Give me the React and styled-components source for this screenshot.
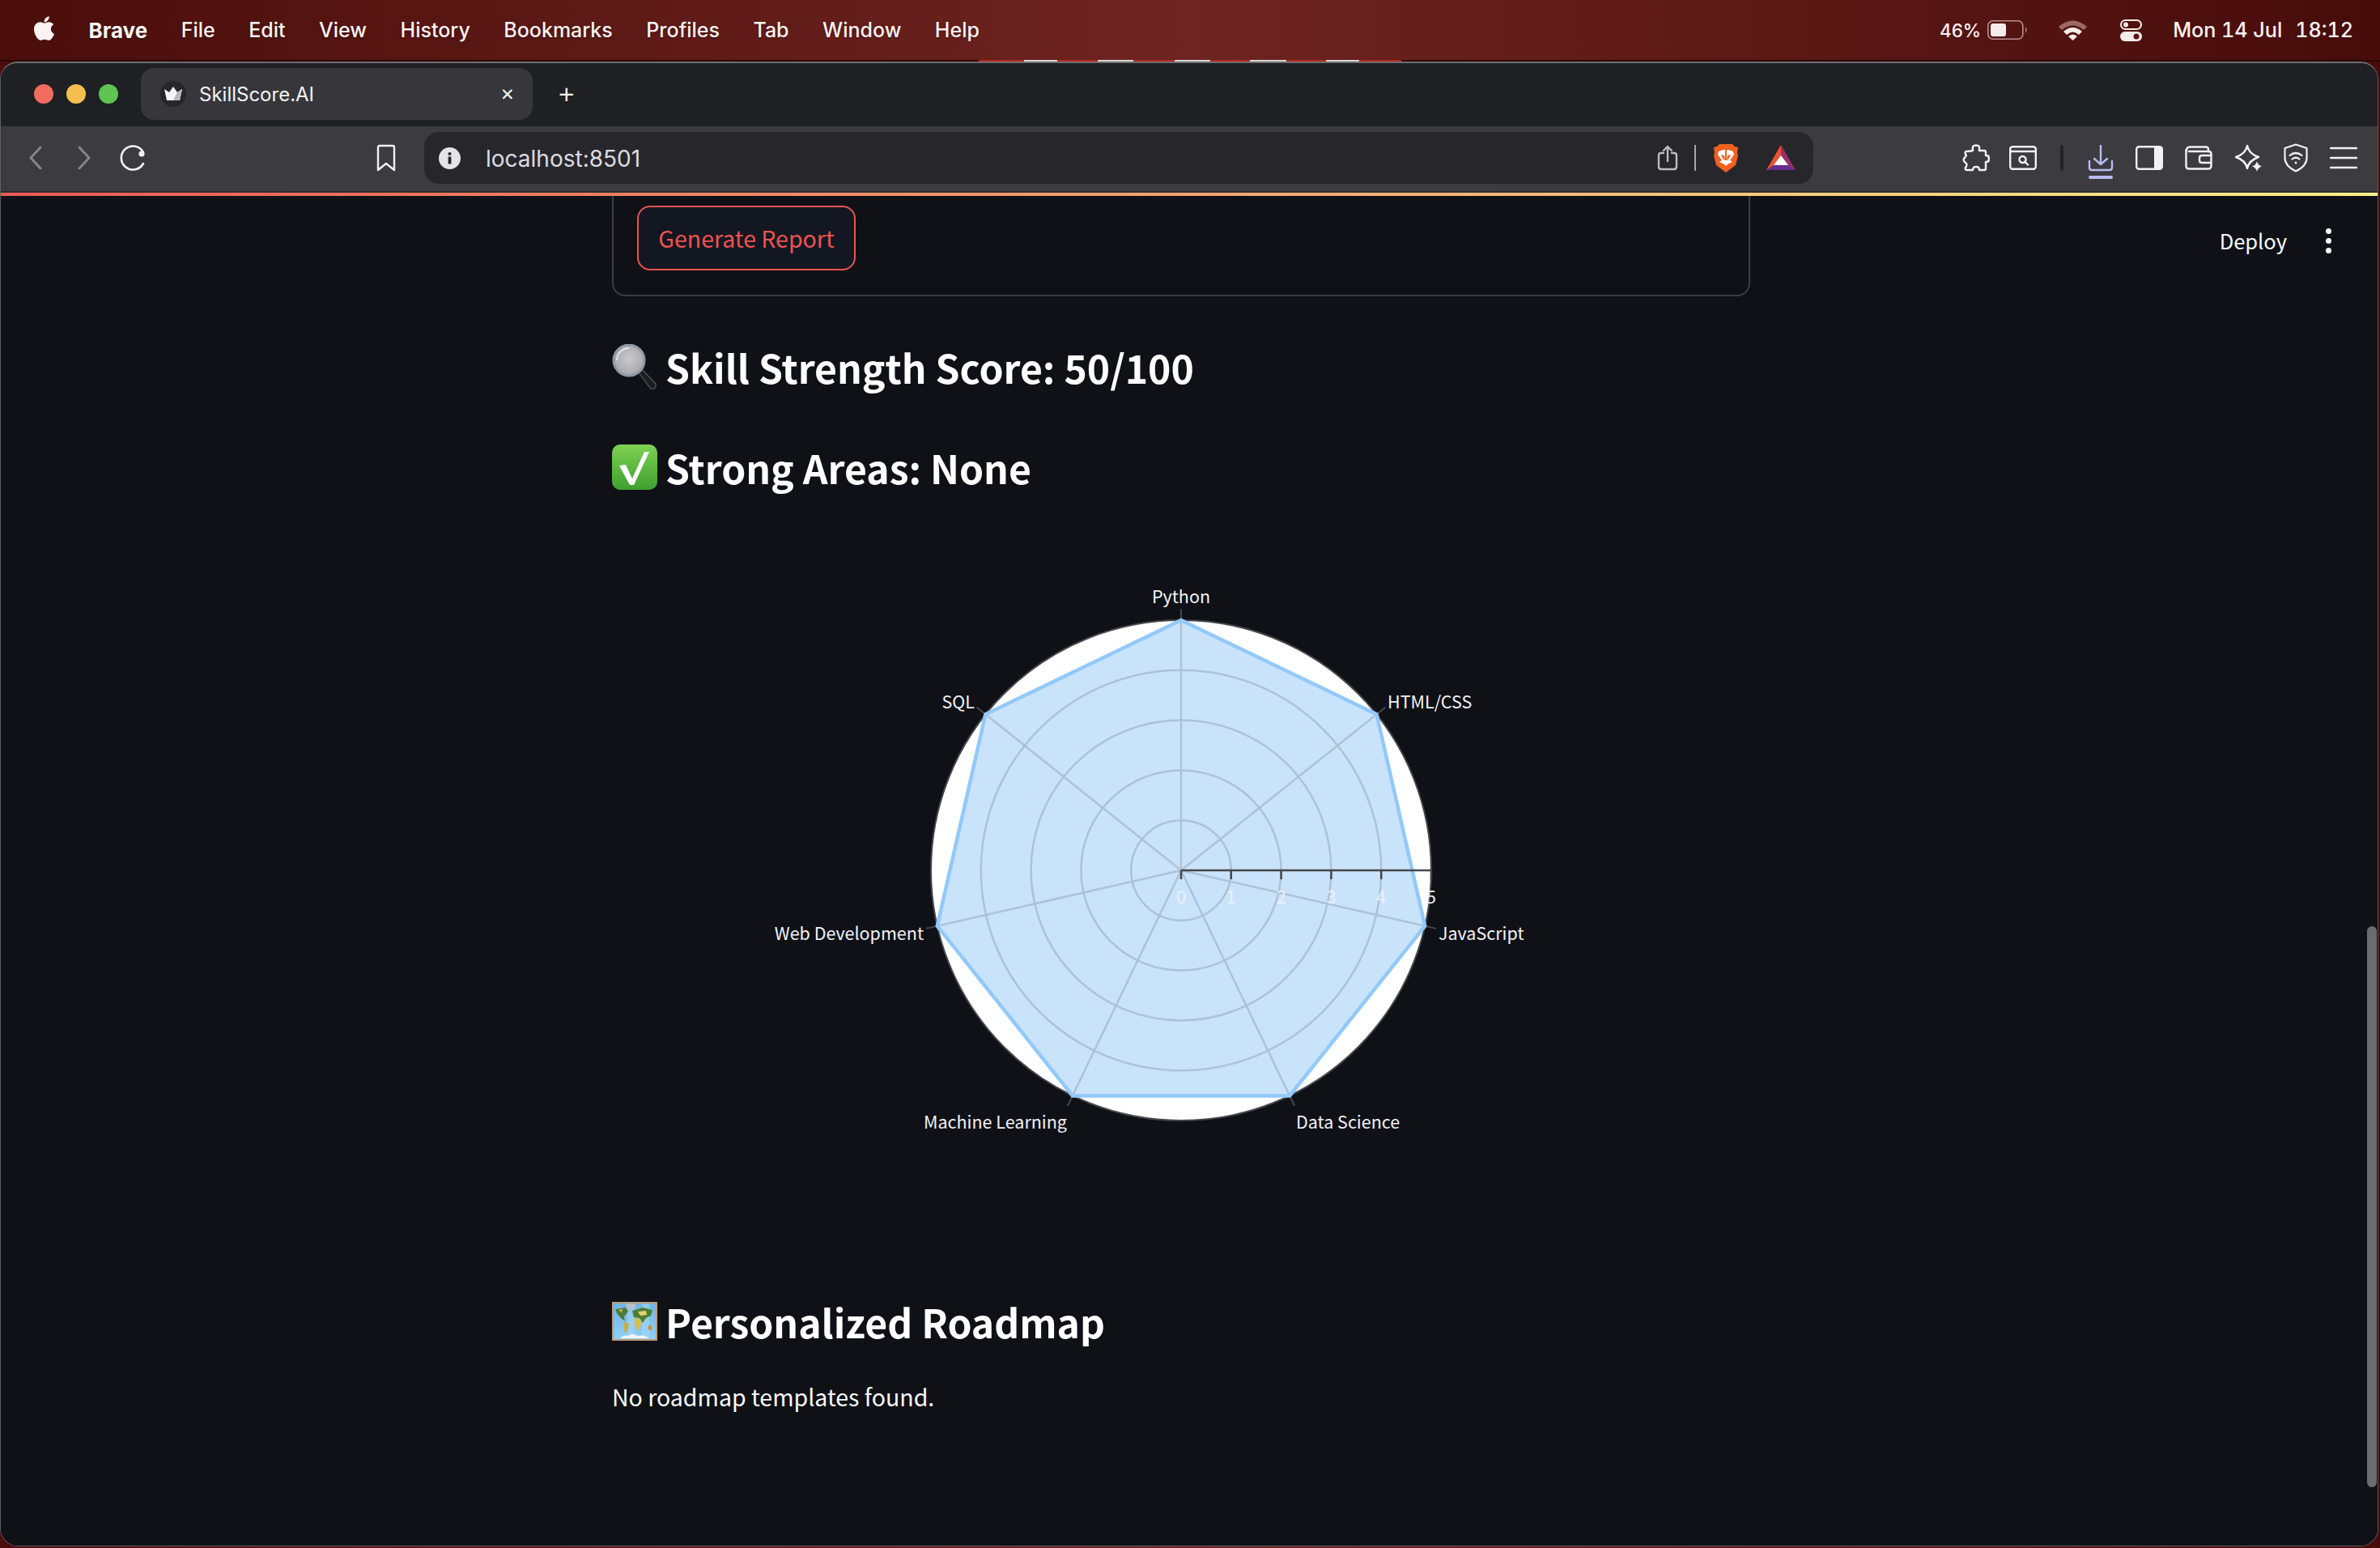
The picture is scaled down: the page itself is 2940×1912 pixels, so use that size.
import React from "react";
import styled, { createGlobalStyle } from "styled-components";
import { FaApple } from "react-icons/fa";

const GlobalStyle = createGlobalStyle`
  html, body {
    margin: 0;
    padding: 0;
    background: #3c0a08;
  }
  * {
    box-sizing: border-box;
  }
`;

const SYSTEM_FONT = `Inter, "Liberation Sans", sans-serif`;
const PAGE_FONT = `"Noto Sans CJK JP", "Noto Sans", sans-serif`;

const MENU_ITEMS = ["File", "Edit", "View", "History", "Bookmarks", "Profiles", "Tab", "Window", "Help"];

const SKILLS = [
  { name: "Python", x: 1459, y: 737, anchor: "middle" },
  { name: "HTML/CSS", x: 1714, y: 867, anchor: "start" },
  { name: "JavaScript", x: 1777, y: 1153, anchor: "start" },
  { name: "Data Science", x: 1601, y: 1386, anchor: "start" },
  { name: "Machine Learning", x: 1318, y: 1386, anchor: "end" },
  { name: "Web Development", x: 1141, y: 1153, anchor: "end" },
  { name: "SQL", x: 1204, y: 867, anchor: "end" },
];

// chart geometry is in screen px, the svg below starts at CHART_TOP
const CHART_LEFT = 756;
const CHART_TOP = 680;
const CX = 1459 - CHART_LEFT;
const CY = 1075 - CHART_TOP;
const RADIUS = 309;
const STEP = RADIUS / 5;

const polar = (index, r) => {
  const a = (index * 2 * Math.PI) / SKILLS.length;
  return [CX + r * Math.sin(a), CY - r * Math.cos(a)];
};

const RadarChart = () => {
  const outline = SKILLS.map((_, i) => polar(i, RADIUS).join(",")).join(" ");
  return (
    <ChartSvg viewBox="0 0 1406 770" aria-label="Skill radar chart">
      <circle cx={CX} cy={CY} r={RADIUS} fill="#fff" stroke="#46474b" strokeWidth="2" />
      <polygon points={outline} fill="#c9e3fb" />
      {[1, 2, 3, 4].map((n) => (
        <circle key={n} cx={CX} cy={CY} r={STEP * n} fill="none" stroke="#aec2d6" strokeWidth="2.5" />
      ))}
      {SKILLS.map((s, i) => {
        const [x1, y1] = polar(i, RADIUS);
        const [x2, y2] = polar(i, RADIUS + 14);
        return (
          <g key={s.name}>
            <line x1={CX} y1={CY} x2={x1} y2={y1} stroke="#aec2d6" strokeWidth="2.5" />
            <line x1={x1} y1={y1} x2={x2} y2={y2} stroke="#46474b" strokeWidth="2" />
          </g>
        );
      })}
      <polygon points={outline} fill="none" stroke="#92c9fb" strokeWidth="4.5" />
      <line x1={CX} y1={CY} x2={CX + RADIUS + 1} y2={CY} stroke="#46474b" strokeWidth="2.5" />
      {[0, 1, 2, 3, 4, 5].map((n) => (
        <g key={n}>
          <line x1={CX + STEP * n} y1={CY} x2={CX + STEP * n} y2={CY + 11} stroke="#46474b" strokeWidth="2.5" />
          <AxisTick x={CX + STEP * n} y={CY + 41} textAnchor="middle">
            {n}
          </AxisTick>
        </g>
      ))}
      {SKILLS.map((s) => (
        <AxisLabel key={s.name} x={s.x - CHART_LEFT} y={s.y - CHART_TOP + 8} textAnchor={s.anchor}>
          {s.name}
        </AxisLabel>
      ))}
    </ChartSvg>
  );
};

const MagnifierEmoji = () => (
  <EmojiSvg viewBox="0 0 56 56">
    <defs>
      <radialGradient id="lens" cx="0.5" cy="0.45" r="0.6">
        <stop offset="0" stopColor="#c9c9cc" />
        <stop offset="1" stopColor="#a4a4a9" />
      </radialGradient>
    </defs>
    <path d="M33 35 L38 32 L54 49 Q55 53 52 55 Q49 56 47 54 Z" fill="#1c1d21" stroke="#55565c" strokeWidth="1.2" />
    <circle cx="21" cy="20" r="19" fill="url(#lens)" stroke="#8d99a6" strokeWidth="3" />
    <path d="M6 20 A15 15 0 0 1 21 5" fill="none" stroke="#e8e8ea" strokeWidth="2" />
  </EmojiSvg>
);

const CheckEmoji = () => (
  <EmojiSvg viewBox="0 0 56 56">
    <defs>
      <linearGradient id="checkBg" x1="0" y1="0" x2="0" y2="1">
        <stop offset="0" stopColor="#7fd152" />
        <stop offset="1" stopColor="#3f9f2e" />
      </linearGradient>
    </defs>
    <rect x="0" y="0" width="56" height="56" rx="10" fill="url(#checkBg)" />
    <path d="M9 26 L17 25 L25 42 L40 9 L46 9 L27 50 L22 50 Z" fill="#fff" />
  </EmojiSvg>
);

const MapEmoji = () => (
  <EmojiSvg viewBox="0 0 56 56">
    <defs>
      <linearGradient id="sea" x1="0" y1="0" x2="0" y2="1">
        <stop offset="0" stopColor="#6fb4e4" />
        <stop offset="1" stopColor="#8fd0f6" />
      </linearGradient>
    </defs>
    <rect x="1" y="5" width="54" height="46" fill="url(#sea)" stroke="#bb9c78" strokeWidth="2" />
    <rect x="19" y="6" width="9" height="44" fill="#a6d8f6" opacity="0.55" />
    <rect x="37" y="6" width="9" height="44" fill="#a6d8f6" opacity="0.55" />
    <path d="M16 7 L30 7 L28 12 L20 13 Z" fill="#b9c0c6" />
    <path d="M4 13 L17 11 L20 16 L15 22 L16 28 L11 24 L6 18 Z" fill="#4f7a35" />
    <path d="M8 14 L13 13 L12 17 Z" fill="#d8c25a" />
    <path d="M15 29 L21 31 L19 40 L16 43 L15 35 Z" fill="#c9ad35" />
    <path d="M25 15 L38 11 L50 14 L48 21 L42 24 L38 30 L34 24 L27 23 Z" fill="#4d7f30" />
    <path d="M27 24 L35 25 L36 33 L32 40 L29 35 Z" fill="#d8be4a" />
    <path d="M32 16 L42 15 L43 20 L35 21 Z" fill="#e0d27e" />
    <path d="M45 33 L49 34 L49 39 L45 38 Z" fill="#d8862c" />
    <path d="M10 49 Q14 44 20 46 Q26 42 32 46 Q40 44 46 49 Z" fill="#f1f7fb" />
  </EmojiSvg>
);

const CrownIcon = () => (
  <svg width="24" height="20" viewBox="0 0 24 20">
    <path d="M1 4 L7 8 L12 1 L17 8 L23 4 L20 18 L4 18 Z" fill="#f4f4f5" />
    <path d="M12 18 L20 18 L23 4 L17 8 Z" fill="#b8b8bc" />
  </svg>
);

const Stroke = styled.svg`
  display: block;
  flex: none;
  fill: none;
  stroke: ${(p) => p.$color || "#f2f2f4"};
  stroke-width: ${(p) => p.$weight || 2.4};
  stroke-linecap: round;
  stroke-linejoin: round;
`;

const BackIcon = ({ color }) => (
  <Stroke $color={color} $weight={3} width="16" height="30" viewBox="0 0 16 30">
    <path d="M14 2 L2 15 L14 28" />
  </Stroke>
);

const ForwardIcon = ({ color }) => (
  <Stroke $color={color} $weight={3} width="16" height="30" viewBox="0 0 16 30">
    <path d="M2 2 L14 15 L2 28" />
  </Stroke>
);

const ReloadIcon = () => (
  <Stroke $weight={2.6} width="34" height="32" viewBox="0 0 34 32">
    <path d="M30 9 A14.5 14.5 0 1 0 30 23" />
    <circle cx="28" cy="11" r="3.6" fill="#f2f2f4" stroke="none" />
  </Stroke>
);

const BookmarkIcon = () => (
  <Stroke width="24" height="34" viewBox="0 0 24 34">
    <path d="M2 4 Q2 2 4 2 H20 Q22 2 22 4 V32 L12 24 L2 32 Z" />
  </Stroke>
);

const InfoIcon = () => (
  <svg width="27" height="27" viewBox="0 0 27 27">
    <circle cx="13.5" cy="13.5" r="13.5" fill="#e3e3e8" />
    <circle cx="13.5" cy="8" r="2" fill="#27272b" />
    <rect x="11.6" y="11.5" width="3.8" height="9" fill="#27272b" />
  </svg>
);

const ShareIcon = () => (
  <Stroke $color="#bdbdc1" width="26" height="32" viewBox="0 0 26 32">
    <path d="M8 10 H5 Q2 10 2 13 V27 Q2 30 5 30 H21 Q24 30 24 27 V13 Q24 10 21 10 H18" />
    <path d="M13 20 V2 M8 7 L13 2 L18 7" />
  </Stroke>
);

const BraveIcon = () => (
  <svg width="32" height="36" viewBox="0 0 32 36">
    <path d="M8 1 H24 L27 4 L31 5 L30 12 L31 15 L28 27 L16 36 L4 27 L1 15 L2 12 L1 5 L5 4 Z" fill="#f0601f" />
    <path d="M7 10 L13 8 H19 L25 10 L26 14 L21 21 L24 23 L18 26 L16 28 L14 26 L8 23 L11 21 L6 14 Z" fill="#fff" />
    <path d="M10 14 L14 15 L15 21 L13 20 Z M22 14 L18 15 L17 21 L19 20 Z M15 8 H17 V21 H15 Z" fill="#f0601f" />
  </svg>
);

const BatIcon = () => (
  <svg width="36" height="32" viewBox="0 0 36 32">
    <path d="M18 0 L0 31 H12 L18 14 Z" fill="#e9542c" />
    <path d="M18 0 L36 31 H24 L18 14 Z" fill="#9b2f6e" />
    <path d="M0 31 L9 25 H27 L36 31 Z" fill="#662d91" />
    <path d="M18 13 L27 25 H9 Z" fill="#fff" />
  </svg>
);

const PuzzleIcon = () => (
  <Stroke width="34" height="34" viewBox="0 0 34 34">
    <path d="M13 6 Q12 1.5 17 1.5 Q22 1.5 21 6 L21 8 H27 Q29 8 29 10 V14 H30 Q33 14 33 18 Q33 22 30 22 H29 V30 Q29 32 27 32 H21 Q21 28 17 28 Q13 28 13 32 H6 Q3 32 4 29 Q7 25 4 23 Q1 21 2 18 L5 14 Q2 10 5 9 Q9 9 13 8 Z" />
  </Stroke>
);

const SearchWindowIcon = () => (
  <Stroke width="34" height="30" viewBox="0 0 34 30">
    <rect x="1.2" y="1.2" width="31.6" height="27.6" rx="3" />
    <path d="M1.2 7 H32.8" />
    <circle cx="16.5" cy="17" r="4" />
    <path d="M19.5 20 L23 23.5" />
  </Stroke>
);

const DownloadIcon = () => (
  <Stroke $color="#b9bcf2" width="32" height="42" viewBox="0 0 32 42">
    <path d="M16 1 V24 M8 17 L16 24 L24 17" />
    <path d="M2 20 V28 Q2 31 5 31 H27 Q30 31 30 28 V20" />
    <path d="M3 40 H29" strokeWidth="4" />
  </Stroke>
);

const SidebarIcon = () => (
  <svg width="34" height="30" viewBox="0 0 34 30">
    <rect x="1.2" y="1.2" width="31.6" height="27.6" rx="3" fill="none" stroke="#f2f2f4" strokeWidth="2.4" />
    <path d="M23 1.2 H30 Q32.8 1.2 32.8 4 V26 Q32.8 28.8 30 28.8 H23 Z" fill="#f2f2f4" />
  </svg>
);

const WalletIcon = () => (
  <Stroke width="34" height="30" viewBox="0 0 34 30">
    <path d="M2 6 Q2 1.5 6 1.5 H26 Q29 1.5 29 5 V7" />
    <path d="M1.5 5 V25 Q1.5 28.5 5 28.5 H29 Q32.5 28.5 32.5 25 V10 Q32.5 7 29 7 H5" />
    <path d="M32.5 12 H21 Q18 12 18 15 V18 Q18 21 21 21 H32.5" />
  </Stroke>
);

const SparkleIcon = () => (
  <svg width="34" height="34" viewBox="0 0 34 34">
    <path d="M16 2 Q18 12 30 16 Q18 20 16 30 Q14 20 2 16 Q14 12 16 2 Z" fill="none" stroke="#f2f2f4" strokeWidth="2.4" strokeLinejoin="round" />
    <path d="M28 21 Q29 26 34 27.500 Q29 29 28 34 Q27 29 22 27.500 Q27 26 28 21 Z" fill="#f2f2f4" />
  </svg>
);

const ShieldIcon = () => (
  <Stroke $weight={2.2} width="30" height="36" viewBox="0 0 30 36">
    <path d="M15 1.5 L28.5 6 V18 Q28.5 28 15 34.5 Q1.500 28 1.500 18 V6 Z" />
    <path d="M7.500 15 Q15 9 22.500 15 M10.500 19.500 Q15 16 19.500 19.500" />
    <circle cx="15" cy="24" r="1.500" fill="#f2f2f4" stroke="none" />
  </Stroke>
);

const BurgerIcon = () => (
  <Stroke width="34" height="28" viewBox="0 0 34 28">
    <path d="M1 2 H33 M1 14 H33 M1 26 H33" />
  </Stroke>
);

const BatteryIcon = () => (
  <svg width="50" height="24" viewBox="0 0 50 24">
    <rect x="0.8" y="0.8" width="43" height="22.4" rx="6" fill="none" stroke="#b9918e" strokeWidth="1.6" />
    <rect x="4" y="4" width="19" height="16" rx="3" fill="#f6ecea" />
    <path d="M47 8 Q50 12 47 16 Z" fill="#b9918e" />
  </svg>
);

const WifiIcon = () => (
  <svg width="35" height="25" viewBox="0 0 35 25">
    <path d="M0 8 Q17.500 -7 35 8 L31 12 Q17.500 1 4 12 Z" fill="#9c6a66" />
    <path d="M6 14 Q17.500 4 29 14 L25 18 Q17.500 11 10 18 Z" fill="#f6ecea" />
    <path d="M12 20 Q17.500 15 23 20 L17.500 25 Z" fill="#f6ecea" />
  </svg>
);

const ControlIcon = () => (
  <svg width="27" height="27" viewBox="0 0 27 27">
    <rect x="1" y="1" width="25" height="11" rx="5.500" fill="none" stroke="#f6ecea" strokeWidth="2" />
    <circle cx="7" cy="6.500" r="3" fill="#f6ecea" />
    <rect x="0" y="15" width="27" height="12" rx="6" fill="#f6ecea" />
    <circle cx="20" cy="21" r="3.500" fill="#5a1613" />
  </svg>
);

export default function App() {
  return (
    <>
      <GlobalStyle />
      <Desktop>
        <MenuBar>
          <MenuLeft>
            <AppleMark>
              <FaApple size={34} color="#fbf3f2" />
            </AppleMark>
            <MenuItem $bold>Brave</MenuItem>
            {MENU_ITEMS.map((item) => (
              <MenuItem key={item}>{item}</MenuItem>
            ))}
          </MenuLeft>
          <MenuRight>
            <Battery>
              <StatusText>46%</StatusText>
              <BatteryIcon />
            </Battery>
            <WifiIcon />
            <ControlSlot>
              <ControlIcon />
            </ControlSlot>
            <Clock>
              <span>Mon 14 Jul</span>
              <span>18:12</span>
            </Clock>
          </MenuRight>
        </MenuBar>
        <WallpaperEdge />

        <BrowserWindow>
          <TabStrip>
            <TrafficLights>
              <Light $color="#f26c60" />
              <Light $color="#f5bf4f" />
              <Light $color="#5fc454" />
            </TrafficLights>
            <Tab>
              <Favicon>
                <CrownIcon />
              </Favicon>
              <TabTitle>SkillScore.AI</TabTitle>
              <TabClose>✕</TabClose>
            </Tab>
            <NewTab>+</NewTab>
          </TabStrip>

          <Toolbar>
            <NavGroup>
              <BackIcon color="#85858a" />
              <ForwardIcon color="#85858a" />
              <ReloadSlot>
                <ReloadIcon />
              </ReloadSlot>
            </NavGroup>
            <BookmarkSlot>
              <BookmarkIcon />
            </BookmarkSlot>
            <UrlBar>
              <InfoIcon />
              <UrlText>localhost:8501</UrlText>
              <UrlActions>
                <ShareIcon />
                <UrlDivider />
                <BraveIcon />
                <BatSlot>
                  <BatIcon />
                </BatSlot>
              </UrlActions>
            </UrlBar>
            <ToolIcons>
              <PuzzleSlot>
                <PuzzleIcon />
              </PuzzleSlot>
              <SearchWindowIcon />
              <ToolDivider />
              <DownloadSlot>
                <DownloadIcon />
              </DownloadSlot>
              <SidebarIcon />
              <WalletIcon />
              <SparkleIcon />
              <ShieldIcon />
              <BurgerIcon />
            </ToolIcons>
          </Toolbar>

          <Decoration />

          <Page>
            <DeployBar>
              <DeployLabel>Deploy</DeployLabel>
              <Kebab>
                <i />
                <i />
                <i />
              </Kebab>
            </DeployBar>

            <Main>
              <FormBox>
                <ReportButton>Generate Report</ReportButton>
              </FormBox>

              <Heading $top={59}>
                <MagnifierEmoji />
                Skill Strength Score: 50/100
              </Heading>
              <Heading $top={68}>
                <CheckEmoji />
                Strong Areas: None
              </Heading>

              <RadarChart />

              <Heading $top={154}>
                <MapEmoji />
                Personalized Roadmap
              </Heading>
              <Paragraph>No roadmap templates found.</Paragraph>
            </Main>

            <ScrollThumb />
          </Page>
        </BrowserWindow>
      </Desktop>
    </>
  );
}

const Desktop = styled.div`
  width: 2940px;
  height: 1912px;
  display: flex;
  flex-direction: column;
  overflow: hidden;
  background: linear-gradient(90deg, #4b0e0b 0%, #6e2420 50%, #470c0a 100%);
`;

const MenuBar = styled.header`
  height: 74px;
  flex: none;
  display: flex;
  align-items: center;
  justify-content: space-between;
  padding: 0 33px 0 41px;
  color: #fbf3f2;
  font-family: ${SYSTEM_FONT};
`;

// sliver of wallpaper that shows between the menu bar and the window
const WallpaperEdge = styled.div`
  height: 2px;
  flex: none;
  background: linear-gradient(
    90deg,
    #2a0705 0 1209px,
    #b52a20 1209px 1265px,
    #d8d8d8 1265px 1306px,
    #b52a20 1306px 1356px,
    #d8d8d8 1356px 1400px,
    #b52a20 1400px 1451px,
    #d8d8d8 1451px 1495px,
    #b52a20 1495px 1544px,
    #d8d8d8 1544px 1589px,
    #b52a20 1589px 1638px,
    #d8d8d8 1638px 1679px,
    #b52a20 1679px 1731px,
    #2a0705 1731px
  );
`;

const MenuLeft = styled.nav`
  display: flex;
  align-items: center;
  gap: 41.5px;
`;

const AppleMark = styled.span`
  display: flex;
  width: 27px;
  justify-content: center;
  margin-top: -4px;
`;

const MenuItem = styled.span`
  font-size: ${(p) => (p.$bold ? 26 : 25)}px;
  font-weight: ${(p) => (p.$bold ? 700 : 500)};
  text-shadow: 0 1px 3px rgba(0, 0, 0, 0.35);
`;

const MenuRight = styled.div`
  display: flex;
  align-items: center;
  gap: 38px;
`;

const Battery = styled.div`
  display: flex;
  align-items: center;
  gap: 8px;
`;

const ControlSlot = styled.span`
  display: flex;
  margin-left: 3px;
`;

const StatusText = styled.span`
  font-size: 22.500px;
  font-weight: 500;
`;

const Clock = styled.div`
  display: flex;
  gap: 16px;
  font-size: 25.100px;
  font-weight: 500;
  font-feature-settings: "tnum";
`;

const BrowserWindow = styled.div`
  flex: 1;
  min-height: 0;
  margin: 0 2px 2px 0;
  display: flex;
  flex-direction: column;
  overflow: hidden;
  background: #0f1117;
  border: 1px solid #5d5d60;
  border-top: 2px solid #6f6f72;
  border-radius: 22px;
`;

const TabStrip = styled.div`
  height: 78px;
  flex: none;
  display: flex;
  align-items: center;
  padding: 0 0 2px 41px;
  background: #1f2024;
  color: #f4f4f6;
  font-family: ${SYSTEM_FONT};
`;

const TrafficLights = styled.div`
  display: flex;
  gap: 16px;
  margin-right: 28px;
`;

const Light = styled.span`
  width: 24px;
  height: 24px;
  border-radius: 50%;
  background: ${(p) => p.$color};
`;

const Tab = styled.div`
  width: 484px;
  height: 64px;
  display: flex;
  align-items: center;
  padding: 0 22px 0 24px;
  border-radius: 16px;
  background: #36363b;
`;

const Favicon = styled.span`
  width: 32px;
  height: 32px;
  display: flex;
  align-items: center;
  justify-content: center;
  border-radius: 50%;
  background: #26272c;
`;

const TabTitle = styled.span`
  flex: 1;
  margin-left: 16px;
  font-size: 24px;
`;

const TabClose = styled.span`
  font-size: 21px;
`;

const NewTab = styled.span`
  margin: -5px 0 0 30px;
  font-size: 36px;
  font-weight: 300;
`;

const Toolbar = styled.div`
  height: 82px;
  flex: none;
  display: flex;
  align-items: center;
  padding-bottom: 2px;
  background: #3b3b40;
  border-bottom: 2px solid #2d2d31;
  font-family: ${SYSTEM_FONT};
`;

const NavGroup = styled.div`
  width: 464px;
  display: flex;
  align-items: center;
  gap: 44px;
  padding-left: 35px;
`;

const ReloadSlot = styled.span`
  display: flex;
  margin-left: -9px;
`;

const BookmarkSlot = styled.div`
  width: 59px;
  display: flex;
`;

const UrlBar = styled.div`
  width: 1716px;
  height: 64px;
  display: flex;
  align-items: center;
  padding: 0 22px 0 18px;
  border-radius: 18px;
  background: #27272b;
`;

const UrlText = styled.span`
  flex: 1;
  margin-left: 31px;
  padding-top: 1px;
  color: #dcdce0;
  font-size: 28px;
`;

const UrlActions = styled.div`
  display: flex;
  align-items: center;
  gap: 20px;
`;

const UrlDivider = styled.span`
  width: 2px;
  height: 32px;
  margin-right: 1px;
  background: #a7a7ab;
`;

const BatSlot = styled.span`
  display: flex;
  margin-left: 14px;
`;

const ToolIcons = styled.div`
  display: flex;
  align-items: center;
  gap: 27px;
  margin-left: 184px;
`;

const PuzzleSlot = styled.span`
  display: flex;
  margin-right: -3px;
`;

const ToolDivider = styled.span`
  width: 4px;
  height: 32px;
  margin: 0 3px 0 2px;
  border-radius: 2px;
  background: #232327;
`;

const DownloadSlot = styled.span`
  display: flex;
  margin-top: 10px;
`;

const Decoration = styled.div`
  height: 4px;
  flex: none;
  background: linear-gradient(90deg, #ee5a56, #f3a46f 50%, #fef08a);
`;

const Page = styled.main`
  position: relative;
  flex: 1;
  min-height: 0;
  overflow: hidden;
  background: #0f1117;
  color: #fff;
  font-family: ${PAGE_FONT};
`;

const DeployBar = styled.div`
  position: absolute;
  top: 39px;
  right: 57px;
  display: flex;
  align-items: center;
  gap: 48px;
`;

const DeployLabel = styled.span`
  font-size: 25.500px;
  line-height: 32px;
  color: #fafafa;
`;

const Kebab = styled.span`
  display: flex;
  flex-direction: column;
  gap: 5px;
  i {
    width: 7px;
    height: 7px;
    border-radius: 50%;
    background: #fafafa;
  }
`;

const ScrollThumb = styled.div`
  position: absolute;
  top: 902px;
  right: 1px;
  width: 12px;
  height: 693px;
  border-radius: 6px;
  background: #6b6c70;
`;

const Main = styled.div`
  width: 1406px;
  margin-left: 755px;
`;

const FormBox = styled.section`
  padding: 12px 29px 30px;
  border: 2px solid #3b3d43;
  border-top: none;
  border-radius: 0 0 16px 16px;
`;

const ReportButton = styled.button`
  display: block;
  width: 270px;
  height: 80px;
  padding: 0 0 2px;
  border: 2px solid #ee5350;
  border-radius: 16px;
  background: #131722;
  color: #ee5350;
  font-family: ${PAGE_FONT};
  font-size: 28.500px;
`;

const Heading = styled.h3`
  display: flex;
  align-items: center;
  gap: 10px;
  height: 56px;
  margin: ${(p) => p.$top}px 0 0;
  color: #fff;
  font-size: 48.100px;
  font-weight: 700;
  line-height: 56px;
`;

const EmojiSvg = styled.svg`
  width: 56px;
  height: 56px;
  flex: none;
`;

const ChartSvg = styled.svg`
  display: block;
  width: 1406px;
  height: 770px;
  margin-top: 75px;
`;

const AxisLabel = styled.text`
  fill: #f0f2f6;
  font-family: ${PAGE_FONT};
  font-size: 21.500px;
`;

const AxisTick = styled.text`
  fill: #eef1f5;
  font-family: ${PAGE_FONT};
  font-size: 21.500px;
`;

const Paragraph = styled.p`
  margin: 41px 0 0;
  color: #fafafa;
  font-size: 28.500px;
  line-height: 48px;
`;
